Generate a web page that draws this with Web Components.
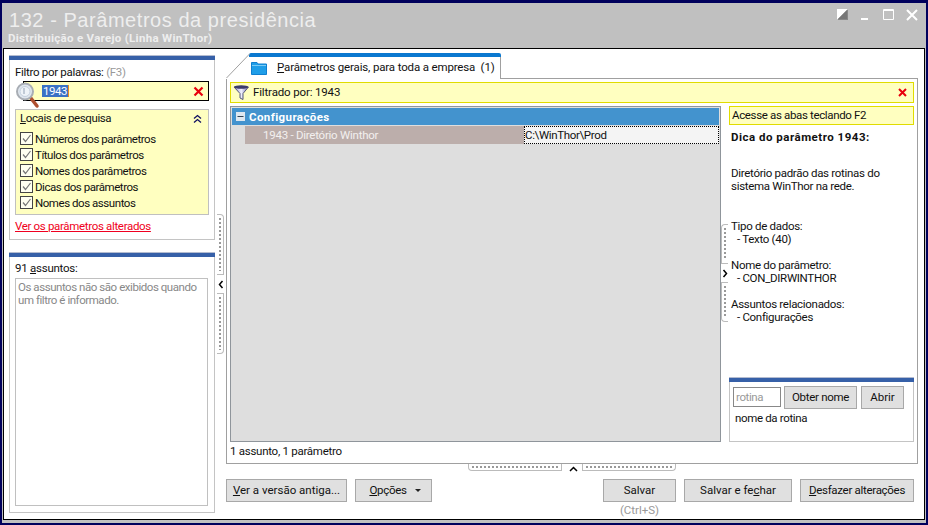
<!DOCTYPE html>
<html lang="pt"><head><meta charset="utf-8"><title>132</title>
<style>
html,body{margin:0;padding:0;background:#c0c0c0}
body{font:11.5px/13px Roboto,sans-serif;color:#111}
</style></head><body>
<app-window></app-window>
<script>
const base=`:host{box-sizing:border-box;font-family:Roboto,"Noto Sans",sans-serif;font-size:11.5px;line-height:13px}*{box-sizing:border-box}u{text-decoration-thickness:1px;text-underline-offset:1px}`;
function def(name,html,setup){customElements.define(name,class extends HTMLElement{constructor(){super();this.attachShadow({mode:'open'}).innerHTML=html;}connectedCallback(){setup&&setup.call(this);}});}

def('title-bar',`<style>${base}
:host{display:flex;flex:none;height:45px;padding:4px 7px 0 6px;color:#eee;justify-content:space-between}
h1{margin:0;font:400 20px/26px "Liberation Sans",sans-serif;letter-spacing:.55px}
p{margin:-2px 0 0 -1px;font:700 11.5px/14px Roboto,sans-serif;letter-spacing:.3px}
.ic{display:flex;gap:11px;padding-top:2px;height:20px}svg{display:block}
</style><div><h1>132 - Parâmetros da presidência</h1><p>Distribuição e Varejo (Linha WinThor)</p></div>
<div class="ic">
<svg width="12" height="12"><rect width="11" height="11" fill="#fff"/><path d="M11 0L0 11H11Z" fill="#888"/><path d="M1 10H10V1Z" fill="#777"/></svg>
<svg width="12" height="12"><rect x="1" y="9" width="7" height="2" fill="#fff"/></svg>
<svg width="12" height="12"><path d="M.5 .5H10.500V10.500H.5Z M0 1.500H11" fill="none" stroke="#fff"/></svg>
<svg width="12" height="12"><path d="M1 1L11 11M11 1L1 11" stroke="#fff" stroke-width="2"/></svg>
</div>`);

def('side-panel',`<style>${base}
:host{display:flex;flex-direction:column;border:1px solid #c4c4c4;border-top:0;background:#fff;position:relative}
.bar{height:5px;background:#3660a8;margin:0 -1px;border-top:1px solid #b4bcd0}
.in{flex:1;display:flex;flex-direction:column;min-height:0}
</style><div class="bar"></div><div class="in"><slot></slot></div>`);

def('check-row',`<style>${base}
:host{display:flex;align-items:center;gap:1px;height:16px;color:#111;letter-spacing:-.45px}svg{display:block;flex:none}
</style><svg width="14" height="14"><rect x=".5" y=".5" width="12" height="12" fill="#fffff0" stroke="#444"/><path d="M3 6.500L5.500 9.500L10.500 3" fill="none" stroke="#777" stroke-width="1.200"/></svg><span><slot></slot></span>`);

def('win-btn',`<style>${base}
:host{display:flex;align-items:center;justify-content:center;background:#e0e0e0;border:1px solid #a8a8a8;height:23px;color:#111;white-space:nowrap;flex:none}
</style><slot></slot>`);

def('split-v',`<style>${base}
:host{display:flex;flex-direction:column;align-items:center;width:7px;--h:61px}
.h{width:7px;height:var(--h);border:1px solid #bbb;background:#fff;position:relative}
.h::after{content:"";position:absolute;left:2px;top:3px;bottom:3px;width:2px;background:repeating-linear-gradient(#999 0 2px,transparent 2px 4px)}
.t{border-left:0;border-top-right-radius:4px}.b{border-left:0;border-bottom-right-radius:4px}
:host([flip]) .h{border-left:1px solid #bbb;border-right:0}
:host([flip]) .t{border-radius:4px 0 0 0}:host([flip]) .b{border-radius:0 0 0 4px}
svg{display:block;margin:5px 0 4px;flex:none}
</style><div class="h t"></div><svg width="6" height="9"><path id="p" d="M4.500 1L1.500 4.500L4.500 8" fill="none" stroke="#000" stroke-width="1.500"/></svg><div class="h b"></div>`,function(){if(this.hasAttribute('flip'))this.shadowRoot.getElementById('p').setAttribute('d','M1.500 1L4.500 4.500L1.500 8');});

def('split-h',`<style>${base}
:host{display:flex;flex:none;justify-content:center;align-items:flex-start;height:15px}
.h{width:94px;height:7px;border:1px solid #bbb;border-top:0;background:#fff;position:relative}
.h::after{content:"";position:absolute;top:2px;left:3px;right:3px;height:2px;background:repeating-linear-gradient(90deg,#999 0 2px,transparent 2px 4px)}
.l{border-radius:0 0 0 4px}.r{border-radius:0 0 4px 0}
svg{display:block;margin:2px 4px 0 7px}
</style><div class="h l"></div><svg width="9" height="6"><path d="M1 5L4.500 1.500L8 5" fill="none" stroke="#000" stroke-width="1.500"/></svg><div class="h r"></div>`);

def('filter-panel',`<style>${base}
:host{display:flex;flex-direction:column;height:100%}
.lab{padding:4px 0 0 5px;height:21px;line-height:16px;letter-spacing:-.3px}.lab i{font-style:normal;color:#999}
.s{position:relative;margin:0 5px 8px 13px;height:20px;background:#ffffc0;border:1px solid #000;display:flex;align-items:center;justify-content:space-between;padding:0 4px 0 18px}
.s b{font-weight:400;background:#3a72c4;color:#fff;padding:0 1px;border-right:1px solid #e98a20;line-height:12px;letter-spacing:-.5px}
.mag{position:absolute;left:-8px;top:0}
.box{margin:0 5px;height:106px;background:#ffffc0;border:1px solid #c0c0c0;padding:1px 4px}
.t{display:flex;justify-content:space-between;align-items:center;height:15px;margin-bottom:5px;line-height:15px;padding-right:2px;letter-spacing:-.4px}
.lnk{margin:4px 0 0 5px;color:#f00020;text-decoration:underline;text-underline-offset:1px;line-height:14px;letter-spacing:-.33px}
svg{display:block}
</style>
<div class="lab">Filtro por palavras: <i>(F3)</i></div>
<div class="s"><svg class="mag" width="24" height="27" viewBox="0 0 24 27"><path d="M14 15L21 24" stroke="#b05030" stroke-width="3.500" stroke-linecap="round"/><circle cx="9" cy="9.500" r="8" fill="#dfe6ee" stroke="#a8adb4" stroke-width="2"/><circle cx="9" cy="9.500" r="5" fill="#eef3f8" stroke="#c4d0de"/><path d="M8 6V12" stroke="#b0bccb" stroke-width="1.500"/></svg><b>1943</b>
<svg width="11" height="11"><path d="M1.500 1.500L9.500 9.500M9.500 1.500L1.500 9.500" stroke="#e8000c" stroke-width="2.200"/></svg></div>
<div class="box"><div class="t"><span><u>L</u>ocais de pesquisa</span><svg width="9" height="10"><path d="M1 4.500L4.500 1.500L8 4.500M1 8.500L4.500 5.500L8 8.500" fill="none" stroke="#101060" stroke-width="1.300"/></svg></div>
<check-row>Números dos parâmetros</check-row><check-row>Títulos dos parâmetros</check-row><check-row>Nomes dos parâmetros</check-row><check-row>Dicas dos parâmetros</check-row><check-row>Nomes dos assuntos</check-row></div>
<div class="lnk">Ver os parâmetros alterados</div>`);

def('subject-panel',`<style>${base}
:host{display:flex;flex-direction:column;height:100%;padding:4px 6px 6px 5px}
.l{height:17px;line-height:14px;letter-spacing:-.25px}
.b{flex:1;border:1px solid #c0c0c0;color:#888;padding:2px;line-height:13px;letter-spacing:-.45px}u{text-underline-offset:1px}
</style><div class="l">91 <u>a</u>ssuntos:</div><div class="b">Os assuntos não são exibidos quando um filtro é informado.</div>`);

def('tab-strip',`<style>${base}
:host{display:block;flex:none;height:26px;margin-bottom:-1px;position:relative;z-index:1}
.tab{position:relative;width:275px;height:26px;padding:0 0 0 23px;background:linear-gradient(135deg,transparent 17px,#fff 17px);white-space:nowrap}
.top{height:4px;background:#0a78d0;border-radius:2px 2px 0 0}
.bd{position:absolute;right:0;top:4px;bottom:0;border-right:1px solid #a0a0a0;width:1px}
.c{display:flex;align-items:center;height:21px;padding-left:2px;letter-spacing:-.15px}.c span{margin-left:10px}
.dg{position:absolute;left:0;top:0}svg{display:block;flex:none}
</style><div class="tab"><svg class="dg" width="26" height="26"><path d="M.5 25L23.500 1" stroke="#a0a0a0" fill="none"/></svg><div class="top"></div><div class="bd"></div>
<div class="c"><svg width="16" height="14"><path d="M.5 3V1.500H6L7 3H15.500V13.500H.5Z" fill="#1f9ee8" stroke="#0f7fd0"/><rect x="1" y="4" width="14" height="1" fill="#7ccbf4"/></svg><span><u>P</u>arâmetros gerais, para toda a empresa &nbsp;(1)</span></div></div>`);

def('filter-bar',`<style>${base}
:host{display:flex;align-items:center;height:21px;background:#ffffc0;border:1px solid #e0dc00;justify-content:space-between;padding:0 6px 0 2px;letter-spacing:-.15px}
div{display:flex;align-items:center;gap:3px}svg{display:block}
</style><div><svg width="17" height="17"><defs><linearGradient id="f" x1="0" x2="1" y1="0" y2="0"><stop offset="0" stop-color="#8f8ad0"/><stop offset=".5" stop-color="#f2f2ff"/><stop offset="1" stop-color="#6f6cae"/></linearGradient></defs><path d="M1 3H15.500L10 9.500V15.500L7 14V9.500Z" fill="url(#f)" stroke="#555878"/><ellipse cx="8.200" cy="3" rx="7" ry="1.700" fill="#3a3c6c"/></svg><span>Filtrado por: 1943</span></div>
<svg width="9" height="9"><path d="M1 1L8 8M8 1L1 8" stroke="#e8000c" stroke-width="2"/></svg>`);

def('param-grid',`<style>${base}
:host{display:block;background:#dedede;border:1px solid #8f959b;padding:1px}
.h{height:17px;background:#4393ce;color:#fff;font-weight:700;display:flex;align-items:center;gap:4px;padding:1px 0 0 4px;letter-spacing:.4px}
.h svg{display:block;margin-top:-1px}
.r{display:flex;height:18px;margin:1px 0 0 13px}
.n{width:279px;background:#bcaeab;color:#f3f0ef;padding-left:18px;line-height:18px;letter-spacing:-.25px}
.v{flex:1;background:#f4f4f4;border:1px dotted #000;color:#111;line-height:16px;letter-spacing:-.35px}
</style><div class="h"><svg width="9" height="9"><rect width="9" height="9" fill="#dfe8f0"/><rect x="1.500" y="4" width="6" height="1" fill="#345"/></svg><span>Configurações</span></div>
<div class="r"><div class="n">1943 - Diretório Winthor</div><div class="v">C:\\WinThor\\Prod</div></div>`);

def('tip-panel',`<style>${base}
:host{display:flex;flex-direction:column;height:100%}
.k{height:19px;background:#ffffc0;border:1px solid #e0dc00;padding-left:2px;line-height:17px;letter-spacing:-.35px}
.d{flex:1;padding:6px 0 0 2px;line-height:13px;letter-spacing:-.3px}
b{display:block;margin-bottom:23px;letter-spacing:.5px}
p{margin:0 0 27px}.i{padding-left:6px}p.x{margin-bottom:13px}
</style><div class="k">Acesse as abas teclando F2</div>
<div class="d"><b>Dica do parâmetro 1943:</b>
<p>Diretório padrão das rotinas do<br>sistema WinThor na rede.</p>
<p class="x">Tipo de dados:<br><span class="i">- Texto (40)</span></p>
<p class="x">Nome do parâmetro:<br><span class="i">- CON_DIRWINTHOR</span></p>
<p class="x">Assuntos relacionados:<br><span class="i">- Configurações</span></p></div>
<slot></slot>`);

def('routine-box',`<style>${base}
:host{display:block;height:65px;flex:none}
.c{padding:4px 0 0 3px;display:flex;gap:3px;align-items:flex-start}
.in{width:48px;height:20px;margin-top:1px;border:1px solid #888;color:#999;padding-left:2px;line-height:18px;background:#fff;letter-spacing:-.4px}
.n{padding:3px 0 0 5px;line-height:13px;letter-spacing:-.35px}
</style><side-panel style="height:100%"><div class="c"><div class="in">rotina</div><win-btn style="width:73px;letter-spacing:-.3px">Obter nome</win-btn><win-btn style="width:43px;margin-left:1px">Abrir</win-btn></div><div class="n">nome da rotina</div></side-panel>`);

def('app-window',`<style>${base}
:host{display:flex;flex-direction:column;width:928px;height:525px;background:#c0c0c0;border:2px solid #00005c;border-width:3px 2px 2px;padding:0 1px 3px}
.body{flex:1;border:1px solid #000;background:#fff;display:grid;grid-template-columns:206px 11px 692px;padding:0 4px 0 5px;min-height:0}
.left{display:flex;flex-direction:column;gap:12px;padding-top:6px;min-height:0}
.gut{padding:165px 0 0 2px}
.right{display:flex;flex-direction:column;padding-top:4px;min-height:0}
.main{height:386px;flex:none;border:1px solid #a0a0a0;padding:3px;display:flex;flex-direction:column;background:#fff}
.top{flex:none;margin-bottom:3px}
.cols{display:grid;grid-template-columns:491px 8px 185px;height:336px}
.g2{padding:118px 0 0 0}
.st{line-height:15px;padding-top:2px;letter-spacing:-.27px}
.btns{display:flex;gap:8px;align-items:flex-start;padding-right:4px}
.sp{flex:1}
.sv{display:flex;flex-direction:column;align-items:center;color:#999}.sv span{line-height:16px}
.o{display:flex;align-items:center;gap:8px;padding-left:3px;letter-spacing:-.3px}
</style>
<title-bar></title-bar>
<div class="body">
<div class="left"><side-panel style="height:185px"><filter-panel></filter-panel></side-panel><side-panel style="height:261px"><subject-panel></subject-panel></side-panel></div>
<div class="gut"><split-v></split-v></div>
<div class="right"><tab-strip></tab-strip>
<div class="main"><filter-bar class="top"></filter-bar>
<div class="cols"><param-grid></param-grid><div class="g2"><split-v flip style="--h:40px"></split-v></div><tip-panel><routine-box></routine-box></tip-panel></div>
<div class="st">1 assunto, 1 parâmetro</div></div>
<split-h></split-h>
<div class="btns"><win-btn style="width:121px"><span><u>V</u>er a versão antiga...</span></win-btn><win-btn style="width:77px"><span class="o"><span><u>O</u>pções</span><svg width="6" height="3" style="display:block"><path d="M0 0H6L3 3Z" fill="#222"/></svg></span></win-btn><div class="sp"></div>
<div class="sv"><win-btn style="width:73px">Salvar</win-btn><span>(Ctrl+S)</span></div><win-btn style="width:108px"><span>Salvar e fe<u>c</u>har</span></win-btn><win-btn style="width:114px;letter-spacing:-.3px"><span><u>D</u>esfazer alterações</span></win-btn></div>
</div></div>`);
</script></body></html>
